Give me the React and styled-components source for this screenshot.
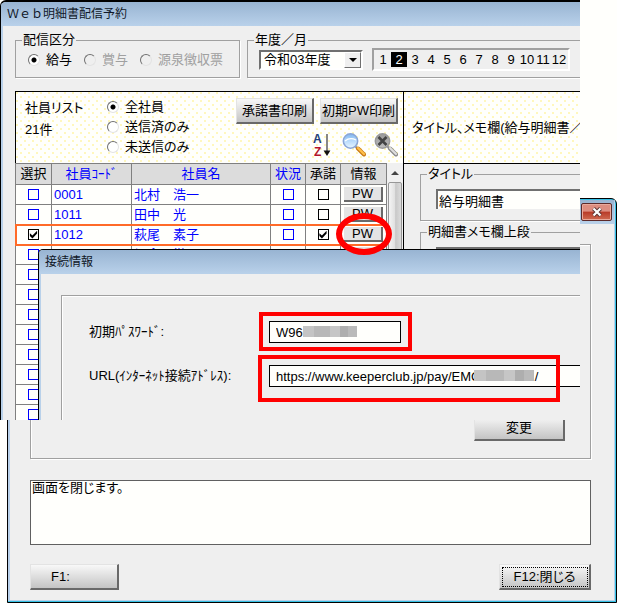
import { useState } from "react";
import styled, { createGlobalStyle, css } from "styled-components";

const GlobalStyle = createGlobalStyle`
  :root {
    --face: #efefef;
    --paper: #fffffc;
    --line: #a0a0a0;
    --grid: #808080;
    --blue: #0000ff;
    --red: #ff0000;
    --frame: #b9d1ea;
    --cyan: #35c0e4;
  }

  * {
    box-sizing: border-box;
  }

  body {
    margin: 0;
    background: var(--paper);
    color: #000;
    font-family: "Liberation Sans", "Noto Sans CJK JP", sans-serif;
    font-size: 13px;
    line-height: 14px;
    font-feature-settings: "palt";
  }

  button,
  input,
  select,
  textarea {
    font: inherit;
    font-feature-settings: inherit;
    color: inherit;
    margin: 0;
  }
`;

const Desktop = styled.main`
  position: relative;
  display: flex;
  flex-direction: column;
  padding: 198px 0 0 7px;
  overflow: hidden;
`;

/* ---------- shared parts ---------- */

const TitleBar = styled.header`
  display: flex;
  align-items: center;
  height: 24px;
  padding: 0 6px;
  background: linear-gradient(#98b4d2, #b9d1ea);
`;

const WindowTitle = styled.h1`
  margin: 0;
  font-size: 12px;
  font-weight: 400;
  font-feature-settings: normal;
  color: #101828;
  white-space: nowrap;
`;

const Button = styled.button`
  width: ${({ $width }) => $width};
  height: 26px;
  padding: 0 ${({ $indent }) => $indent || "0"};
  text-align: ${({ $indent }) => ($indent ? "left" : "center")};
  white-space: nowrap;
  border: 2px solid;
  border-width: 1px 2px 2px 1px;
  border-color: #e3e3e3 #696969 #696969 #e3e3e3;
  border-radius: 0;
  background: linear-gradient(#f8f8f8, #c4c4c4);
  ${({ $focused }) =>
    $focused &&
    css`
      outline: 1px dotted #000;
      outline-offset: -4px;
    `}
`;

const GroupBox = styled.fieldset`
  min-width: 0;
  margin: 0;
  padding: 0;
  border: 1px solid var(--line);
  box-shadow: 1px 1px 0 #fff;
`;

const Legend = styled.legend`
  margin-left: 6px;
  padding: 0 1px;
  white-space: nowrap;
`;

const RadioLabel = styled.label`
  display: flex;
  align-items: center;
  gap: 6px;
  line-height: 20px;
  white-space: nowrap;
  color: ${({ $disabled }) => ($disabled ? "#a0a0a0" : "#000")};
`;

const Radio = styled.input.attrs({ type: "radio" })`
  appearance: none;
  flex: none;
  width: 12px;
  height: 12px;
  border: 1px solid;
  border-color: #707070 #e3e3e3 #e3e3e3 #707070;
  border-radius: 50%;
  background: ${({ disabled }) => (disabled ? "var(--face)" : "#fff")};

  &:checked {
    background: radial-gradient(circle, #000 0 2px, #fff 3px);
  }
`;

const Checkbox = styled.input.attrs({ type: "checkbox" })`
  appearance: none;
  display: block;
  width: 11px;
  height: 11px;
  margin: 0 auto;
  border: 1px solid ${({ $color }) => $color || "var(--blue)"};
  background: var(--paper);

  &:checked::before {
    content: "";
    display: block;
    width: 9px;
    height: 9px;
    background: #000;
    clip-path: polygon(10% 35%, 38% 62%, 90% 8%, 90% 40%, 38% 95%, 10% 66%);
  }
`;

const dotted = css`
  background-color: var(--paper);
  background-image:
    radial-gradient(circle at 1px 1px, #fff7bd 1px, transparent 1px),
    radial-gradient(circle at 5px 5px, #fff7bd 1px, transparent 1px);
  background-size: 8px 8px;
`;

/* ---------- rear window ---------- */

const RearWindow = styled.section`
  border: 1px solid #000;
  border-radius: 6px 6px 0 0;
  background: var(--cyan);
  padding: 1px 1px 1px 0;
  overflow: hidden;
`;

const RearFrame = styled.div`
  border: solid var(--frame);
  border-width: 0 1px 1px 2px;
  background: var(--face);
`;

const RearTitleBar = styled(TitleBar)`
  justify-content: flex-end;
  padding: 0 2px;
`;

const CloseButton = styled.button`
  display: flex;
  align-items: center;
  justify-content: center;
  width: 31px;
  height: 18px;
  padding: 0;
  border: 1px solid #5c2a2a;
  border-radius: 2px;
  box-shadow: inset 0 0 0 1px #e9a99c;
  background: linear-gradient(#dd8d80 45%, #b83a28 50%, #cf6b52);
`;

const RearBody = styled.div`
  display: flex;
  flex-direction: column;
  padding: 20px 23px 10px 20px;
`;

const RearPanel = styled.div`
  display: flex;
  align-items: flex-end;
  justify-content: flex-end;
  min-height: 215px;
  padding: 0 25px 17px;
  border: 1px solid var(--line);
  box-shadow:
    1px 1px 0 #fff,
    inset 1px 1px 0 #fff;
`;

const Message = styled.textarea`
  display: block;
  height: 65px;
  margin-top: 21px;
  padding: 0 1px;
  border: 1px solid #606060;
  border-radius: 0;
  background: var(--paper);
  resize: none;
`;

const FunctionKeys = styled.footer`
  display: flex;
  justify-content: space-between;
  margin-top: 19px;
`;

/* ---------- main window ---------- */

const MainWindow = styled.section`
  position: absolute;
  top: 0;
  left: 0;
  right: 37px;
  height: 420px;
  overflow: hidden;
  border: solid #000;
  border-width: 2px 0 0 1px;
  border-top-left-radius: 6px;
  background: var(--face);
  box-shadow: inset 2px 0 0 var(--frame);
`;

const MainBody = styled.div`
  display: flex;
  flex-direction: column;
  gap: 13px;
  padding: 7px 0 0 14px;
`;

const Filters = styled.div`
  display: flex;
  gap: 7px;
`;

const KindBox = styled(GroupBox)`
  flex: none;
  width: 225px;
  height: 45px;
`;

const KindOptions = styled.div`
  display: flex;
  gap: 12px;
  padding: 3px 0 0 12px;
`;

const PeriodBox = styled(GroupBox)`
  flex: 1;
  height: 45px;
  border-right: 0;
`;

const PeriodRow = styled.div`
  display: flex;
  align-items: center;
  gap: 9px;
  padding: 1px 0 0 11px;
`;

const SelectFrame = styled.label`
  display: flex;
  position: relative;
  flex: none;
  width: 104px;
  height: 20px;
  border: 2px solid;
  border-color: #707070 #fff #fff #707070;
  background: var(--paper);
`;

const YearSelect = styled.select`
  appearance: none;
  width: 100%;
  padding: 0 3px;
  border: 0;
  background: none;
  outline: 0;
`;

const SelectArrow = styled.span`
  position: absolute;
  top: 0;
  right: 0;
  bottom: 0;
  display: flex;
  align-items: center;
  justify-content: center;
  width: 17px;
  border: 1px solid;
  border-color: #fff #707070 #707070 #fff;
  background: var(--face);
  pointer-events: none;
`;

const Months = styled.div`
  display: flex;
  flex: none;
  padding: 2px 1px;
  border: 2px solid;
  border-color: #a0a0a0 #fff #fff #a0a0a0;
`;

const Month = styled.button`
  width: 16px;
  height: 15px;
  padding: 0;
  border: 0;
  text-align: center;
  background: ${({ $active }) => ($active ? "#000" : "none")};
  color: ${({ $active }) => ($active ? "#fff" : "#000")};
`;

const Workspace = styled.div`
  display: flex;
`;

const ListPane = styled.section`
  flex: none;
  width: 388px;
`;

const ListTools = styled.div`
  ${dotted}
  display: flex;
  height: 72px;
  padding: 5px 5px 0 9px;
  border: solid #000;
  border-width: 1px 0 0 1px;
`;

const ListInfo = styled.div`
  width: 82px;
  line-height: 22px;
`;

const Scope = styled.div`
  flex: 1;
`;

const Tools = styled.div`
  display: flex;
  flex-direction: column;
  align-items: flex-end;
  gap: 9px;
  padding-top: 1px;
`;

const ToolRow = styled.div`
  display: flex;
  gap: ${({ $gap }) => $gap};
`;

const IconButton = styled.button`
  display: block;
  width: 24px;
  height: 26px;
  padding: 0;
  border: 0;
  background: none;
`;

const ListArea = styled.div`
  display: flex;
`;

const StaffTable = styled.table`
  table-layout: fixed;
  width: 372px;
  border-spacing: 0;
  border: solid var(--grid);
  border-width: 1px 0 0 1px;
  background: var(--paper);
`;

const HeadCell = styled.th`
  width: ${({ $width }) => $width};
  height: 21px;
  padding: 0;
  border: solid var(--grid);
  border-width: 0 1px 1px 0;
  background: #dcdcdc;
  font-weight: 400;
  color: ${({ $sortable }) => ($sortable ? "var(--blue)" : "#000")};
`;

const StaffRow = styled.tr`
  ${({ $selected }) =>
    $selected &&
    css`
      outline: 2px solid #ff6a28;
      outline-offset: -1px;
    `}
`;

const Cell = styled.td`
  height: 20px;
  padding: 0 2px;
  border: solid var(--grid);
  border-width: 0 1px 1px 0;
  color: var(--blue);
  white-space: pre;
`;

const PwButton = styled.button`
  display: block;
  width: 39px;
  height: 15px;
  margin: 0 auto;
  padding: 0;
  border: solid #696969;
  border-width: 0 2px 2px 0;
  background: #e4e4e4;
  color: #000;
  line-height: 13px;
`;

const ScrollBar = styled.div`
  display: flex;
  flex: 1;
  flex-direction: column;
  background: #f0f0f0;
`;

const ScrollUp = styled.button`
  display: flex;
  align-items: center;
  justify-content: center;
  height: 19px;
  padding: 0;
  border: 0;
  background: none;
`;

const ScrollThumb = styled.div`
  flex: 1;
  margin: 0 1px;
  border: 1px solid #979797;
  border-radius: 2px;
  background: linear-gradient(to right, #f4f4f4, #e0e0e0 50%, #c8c8c8 55%, #dcdcdc);
`;

const MemoPane = styled.section`
  flex: 1;
  min-width: 0;
  border-left: 1px solid #000;
`;

const MemoHeading = styled.p`
  ${dotted}
  height: 73px;
  margin: 0;
  padding: 0 8px;
  border: solid #000;
  border-width: 1px 0;
  line-height: 71px;
  white-space: nowrap;
`;

const MemoFields = styled.div`
  display: flex;
  flex-direction: column;
  gap: 4px;
  padding: 3px 0 0 16px;
`;

const MemoBox = styled(GroupBox)`
  height: 54px;
  border-right: 0;
`;

const MemoInput = styled.input`
  display: block;
  width: calc(100% - 15px);
  height: 20px;
  margin: 8px 0 0 15px;
  padding: 0 1px;
  border: solid #707070;
  border-width: 2px 0 0 2px;
  background: var(--paper);
`;

/* ---------- connection dialog ---------- */

const Dialog = styled.section`
  position: absolute;
  top: 247px;
  left: 37px;
  right: 0;
  bottom: 0;
  display: flex;
  flex-direction: column;
  border: solid #000;
  border-width: 1px 0 0 1px;
  border-top-left-radius: 5px;
  background: var(--face);
  box-shadow: inset 2px 0 0 var(--frame);
  overflow: hidden;
`;

const DialogTitleBar = styled(TitleBar)`
  flex: none;
`;

const DialogPanel = styled.div`
  flex: 1;
  display: flex;
  flex-direction: column;
  gap: 22px;
  margin: 21px 0 0 22px;
  padding: 25px 0 0 27px;
  border: solid var(--line);
  border-width: 1px 0 0 1px;
  box-shadow: inset 1px 1px 0 #fff;
`;

const FormRow = styled.div`
  display: grid;
  grid-template-columns: 180px 1fr;
  align-items: center;
`;

const FieldLabel = styled.label`
  white-space: nowrap;
`;

const Field = styled.div`
  position: relative;
  width: ${({ $width }) => $width || "auto"};
`;

const FieldInput = styled.input`
  display: block;
  width: 100%;
  height: 22px;
  padding: 0 6px;
  border: solid #000;
  border-width: ${({ $open }) => ($open ? "1px 0 1px 1px" : "1px")};
  background: var(--paper);
`;

const Mosaic = styled.span`
  position: absolute;
  top: 5px;
  left: ${({ $left }) => $left};
  width: ${({ $width }) => $width};
  height: 11px;
  background: linear-gradient(
    to right,
    #c4c4c4 20%,
    #b8b8b8 20% 50%,
    #c6c6c6 50% 68%,
    #aeaeae 68% 84%,
    #bababa 84%
  );
`;

const Mark = styled.span`
  position: absolute;
  inset: ${({ $inset }) => $inset};
  width: ${({ $width }) => $width || "auto"};
  border: 4px solid var(--red);
  pointer-events: none;
`;

const MarkRing = styled.span`
  position: absolute;
  top: 213px;
  left: 336px;
  width: 56px;
  height: 42px;
  border: 6px solid var(--red);
  border-radius: 50%;
  pointer-events: none;
`;

/* ---------- icons ---------- */

function SortIcon() {
  return (
    <svg width="24" height="26" viewBox="0 0 24 26" aria-hidden="true">
      <text x="3" y="10" fontSize="12" fontWeight="700" fill="#1f3f7d">
        A
      </text>
      <text x="4" y="23" fontSize="12" fontWeight="700" fill="#b3122c">
        Z
      </text>
      <path d="M17 1v17" stroke="#555" strokeWidth="1.4" />
      <path d="M13.6 17.5h6.8L17 23z" fill="#111" />
    </svg>
  );
}

function SearchIcon({ cleared }) {
  const id = cleared ? "lens-cleared" : "lens";
  return (
    <svg width="24" height="26" viewBox="0 0 24 26" aria-hidden="true">
      <defs>
        <linearGradient id={id} x1="0" y1="0" x2="0" y2="1">
          <stop offset="0" stopColor={cleared ? "#999" : "#7fb4ee"} />
          <stop offset="0.45" stopColor={cleared ? "#aaa" : "#b4d8fb"} />
          <stop offset="1" stopColor={cleared ? "#c0c0c0" : "#e8f6ff"} />
        </linearGradient>
      </defs>
      <path d="M13 13l3 3" stroke="#999" strokeWidth="2.4" />
      <path
        d="M16 15.5l6 6"
        stroke={cleared ? "#8a8a8a" : "#c87a18"}
        strokeWidth="4"
        strokeLinecap="round"
      />
      <path
        d="M16 15l6 6"
        stroke={cleared ? "#dedede" : "#ffc04a"}
        strokeWidth="2.2"
        strokeLinecap="round"
      />
      <circle
        cx="8.5"
        cy="8"
        r="7.2"
        fill={`url(#${id})`}
        stroke={cleared ? "#999" : "#8aa5d6"}
        strokeWidth="1.5"
      />
      {cleared ? (
        <path d="M4.500 4l8 8M12.500 4l-8 8" stroke="#444" strokeWidth="2.6" />
      ) : (
        <path d="M3 8q5-4 11-1" stroke="#fff" strokeWidth="1.2" fill="none" />
      )}
    </svg>
  );
}

function CloseIcon() {
  return (
    <svg width="12" height="10" viewBox="0 0 12 10" aria-hidden="true">
      <path d="M2.500 1.500l7 7M9.500 1.500l-7 7" stroke="#5a3434" strokeWidth="4" />
      <path d="M2.500 1.500l7 7M9.500 1.500l-7 7" stroke="#fff" strokeWidth="2.2" />
    </svg>
  );
}

function Triangle({ up }) {
  return (
    <svg width="8" height="4" viewBox="0 0 8 4" aria-hidden="true">
      <path d={up ? "M0 4l4-4 4 4z" : "M0 0h8L4 4z"} fill={up ? "#444" : "#000"} />
    </svg>
  );
}

/* ---------- data ---------- */

const MONTHS = [1, 2, 3, 4, 5, 6, 7, 8, 9, 10, 11, 12];

const KINDS = [
  { name: "給与" },
  { name: "賞与", disabled: true },
  { name: "源泉徴収票", disabled: true },
];

const SCOPES = ["全社員", "送信済のみ", "未送信のみ"];

const COLUMNS = [
  { name: "選択", width: "36px" },
  { name: "社員ｺｰﾄﾞ", width: "80px", sortable: true },
  { name: "社員名", width: "139px", sortable: true },
  { name: "状況", width: "35px", sortable: true },
  { name: "承諾", width: "35px" },
  { name: "情報", width: "46px" },
];

const STAFF = [
  { code: "0001", name: "北村　浩一" },
  { code: "1011", name: "田中　光" },
  { code: "1012", name: "萩尾　素子", selected: true },
  { code: "", name: "堀倉　徹" },
  ...Array.from({ length: 8 }, () => ({ code: "", name: "" })),
];

const URL_VALUE = `https://www.keeperclub.jp/pay/EMC${"\u00a0".repeat(15)}/`;

function RearDialog() {
  return (
    <RearWindow>
      <RearFrame>
        <RearTitleBar>
          <CloseButton type="button" aria-label="閉じる">
            <CloseIcon />
          </CloseButton>
        </RearTitleBar>
        <RearBody>
          <RearPanel>
            <Button type="button" $width="91px">
              変更
            </Button>
          </RearPanel>
          <Message aria-label="メッセージ" readOnly value="画面を閉じます。" />
          <FunctionKeys>
            <Button type="button" $width="89px" $indent="20px">
              F1:
            </Button>
            <Button type="button" $width="92px" $focused>
              F12:閉じる
            </Button>
          </FunctionKeys>
        </RearBody>
      </RearFrame>
    </RearWindow>
  );
}

function StaffList() {
  const [scope, setScope] = useState(SCOPES[0]);

  return (
    <ListPane>
      <ListTools>
        <ListInfo>
          <div>社員リスト</div>
          <div>21件</div>
        </ListInfo>
        <Scope>
          {SCOPES.map((name) => (
            <RadioLabel key={name}>
              <Radio
                name="scope"
                checked={scope === name}
                onChange={() => setScope(name)}
              />
              {name}
            </RadioLabel>
          ))}
        </Scope>
        <Tools>
          <ToolRow $gap="6px">
            <Button type="button" $width="78px">
              承諾書印刷
            </Button>
            <Button type="button" $width="78px">
              初期PW印刷
            </Button>
          </ToolRow>
          <ToolRow $gap="8px">
            <IconButton type="button" aria-label="並べ替え">
              <SortIcon />
            </IconButton>
            <IconButton type="button" aria-label="検索">
              <SearchIcon />
            </IconButton>
            <IconButton type="button" aria-label="検索解除">
              <SearchIcon cleared />
            </IconButton>
          </ToolRow>
        </Tools>
      </ListTools>
      <ListArea>
        <StaffTable>
          <thead>
            <tr>
              {COLUMNS.map(({ name, width, sortable }) => (
                <HeadCell key={name} $width={width} $sortable={sortable}>
                  {name}
                </HeadCell>
              ))}
            </tr>
          </thead>
          <tbody>
            {STAFF.map(({ code, name, selected }, index) => (
              <StaffRow key={index} $selected={selected}>
                <Cell>
                  <Checkbox
                    aria-label="選択"
                    defaultChecked={selected}
                    $color={selected && "#000"}
                  />
                </Cell>
                <Cell>{code}</Cell>
                <Cell>{name}</Cell>
                <Cell>
                  <Checkbox aria-label="状況" />
                </Cell>
                <Cell>
                  <Checkbox
                    aria-label="承諾"
                    defaultChecked={selected}
                    $color="#000"
                  />
                </Cell>
                <Cell>
                  <PwButton type="button">PW</PwButton>
                </Cell>
              </StaffRow>
            ))}
          </tbody>
        </StaffTable>
        <ScrollBar>
          <ScrollUp type="button" aria-label="上へ">
            <Triangle up />
          </ScrollUp>
          <ScrollThumb />
        </ScrollBar>
      </ListArea>
    </ListPane>
  );
}

function ConnectionDialog() {
  return (
    <Dialog>
      <DialogTitleBar>
        <WindowTitle as="h2">接続情報</WindowTitle>
      </DialogTitleBar>
      <DialogPanel>
        <FormRow>
          <FieldLabel htmlFor="password">初期ﾊﾟｽﾜｰﾄﾞ:</FieldLabel>
          <Field $width="132px">
            <FieldInput id="password" defaultValue="W96" />
            <Mosaic $left="34px" $width="54px" />
            <Mark $inset="-9px -11px -8px -10px" />
          </Field>
        </FormRow>
        <FormRow>
          <FieldLabel htmlFor="url">URL(ｲﾝﾀｰﾈｯﾄ接続ｱﾄﾞﾚｽ):</FieldLabel>
          <Field>
            <FieldInput id="url" $open defaultValue={URL_VALUE} />
            <Mosaic $left="205px" $width="60px" />
            <Mark $inset="-10px auto -15px -11px" $width="302px" />
          </Field>
        </FormRow>
      </DialogPanel>
    </Dialog>
  );
}

export default function App() {
  const [month, setMonth] = useState(2);

  return (
    <Desktop>
      <GlobalStyle />
      <RearDialog />
      <MainWindow>
        <TitleBar>
          <WindowTitle>Ｗｅｂ明細書配信予約</WindowTitle>
        </TitleBar>
        <MainBody>
          <Filters>
            <KindBox>
              <Legend>配信区分</Legend>
              <KindOptions>
                {KINDS.map(({ name, disabled }) => (
                  <RadioLabel key={name} $disabled={disabled}>
                    <Radio
                      name="kind"
                      defaultChecked={!disabled}
                      disabled={disabled}
                    />
                    {name}
                  </RadioLabel>
                ))}
              </KindOptions>
            </KindBox>
            <PeriodBox>
              <Legend>年度／月</Legend>
              <PeriodRow>
                <SelectFrame>
                  <YearSelect aria-label="年度">
                    <option>令和03年度</option>
                  </YearSelect>
                  <SelectArrow>
                    <Triangle />
                  </SelectArrow>
                </SelectFrame>
                <Months>
                  {MONTHS.map((value) => (
                    <Month
                      key={value}
                      type="button"
                      $active={value === month}
                      onClick={() => setMonth(value)}
                    >
                      {value}
                    </Month>
                  ))}
                </Months>
              </PeriodRow>
            </PeriodBox>
          </Filters>
          <Workspace>
            <StaffList />
            <MemoPane>
              <MemoHeading>タイトル、メモ欄(給与明細書／</MemoHeading>
              <MemoFields>
                <MemoBox>
                  <Legend>タイトル</Legend>
                  <MemoInput aria-label="タイトル" defaultValue="給与明細書" />
                </MemoBox>
                <MemoBox>
                  <Legend>明細書メモ欄上段</Legend>
                  <MemoInput aria-label="明細書メモ欄上段" />
                </MemoBox>
              </MemoFields>
            </MemoPane>
          </Workspace>
        </MainBody>
        <ConnectionDialog />
      </MainWindow>
      <MarkRing />
    </Desktop>
  );
}
